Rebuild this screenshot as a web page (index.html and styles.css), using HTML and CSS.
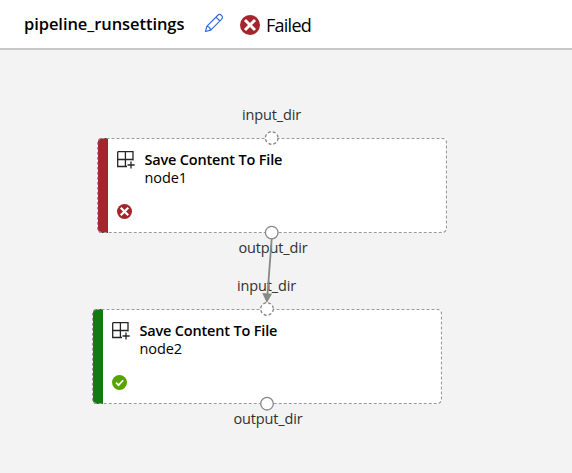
FILE: index.html
```html
<!DOCTYPE html>
<html lang="en">
<head>
<meta charset="utf-8">
<title>pipeline_runsettings</title>
<link rel="stylesheet" href="styles.css">
</head>
<body>
<svg class="defs" width="0" height="0">
  <symbol id="module" viewBox="0 0 18 18"><path d="M.7.7H16V9.5M.7.7V15.5H10M8.4.7V15.5M.7 8.5H16M14 10.5V17.5M10.5 14H17.7" fill="none" stroke="#252525" stroke-width="1.3"/></symbol>
  <symbol id="failed" viewBox="0 0 20 20"><circle cx="10" cy="10" r="10" fill="#a4262c"/><path d="M5 5l10 10M15 5l-10 10" stroke="#fff" stroke-width="2.9"/></symbol>
  <symbol id="done" viewBox="0 0 20 20"><circle cx="10" cy="10" r="10" fill="#57a300"/><path d="M5.3 10.2l3.4 3.4 6.2-6.6" fill="none" stroke="#fff" stroke-width="2.3"/></symbol>
</svg>
<header class="bar">
  <h1 class="title">pipeline_runsettings</h1>
  <svg class="edit" viewBox="0 0 20 20"><path d="M1.5 18.5l1.3-5.2L13.6 2.5Q15.6.5 17.5 2.4T17.5 6.3L6.7 17.1zM2.8 13.3q3.2.5 3.9 3.8M12 4.1l3.9 3.9" fill="none" stroke="#2c68d8" stroke-width="1.15" stroke-linejoin="round"/></svg>
  <svg class="state"><use href="#failed"/></svg>
  <span class="status">Failed</span>
</header>
<main class="canvas">
  <section class="node first">
    <svg class="outline" viewBox="0 0 350 95"><rect x=".5" y=".5" width="349" height="94" rx="4"/></svg>
    <div class="stripe bad"></div>
    <div class="body">
      <svg class="module"><use href="#module"/></svg>
      <div class="text"><div class="name">Save Content To File</div><div class="id">node1</div></div>
      <svg class="badge"><use href="#failed"/></svg>
    </div>
    <span class="label in">input_dir</span>
    <span class="label out">output_dir</span>
  </section>
  <section class="node second">
    <svg class="outline" viewBox="0 0 350 95"><rect x=".5" y=".5" width="349" height="94" rx="4"/></svg>
    <div class="stripe good"></div>
    <div class="body">
      <svg class="module"><use href="#module"/></svg>
      <div class="text"><div class="name">Save Content To File</div><div class="id">node2</div></div>
      <svg class="badge"><use href="#done"/></svg>
    </div>
    <span class="label in">input_dir</span>
    <span class="label out">output_dir</span>
  </section>
  <svg class="edges" viewBox="0 50 572 423">
    <path class="edge" d="M271.7 239L267.5 294"/>
    <path d="M262.3 293L272 293.7L266.8 303z" fill="#8a8886"/>
    <circle class="port open" cx="271.7" cy="138" r="6.3"/>
    <circle class="port" cx="271.7" cy="232.6" r="6.3"/>
    <circle class="port open" cx="267" cy="309" r="6.3"/>
    <circle class="port" cx="267" cy="403.7" r="6.3"/>
  </svg>
</main>
</body>
</html>
```

FILE: styles.css
```css
* { box-sizing: border-box; }
body {
  margin: 0;
  height: 473px;
  overflow: hidden;
  display: flex;
  flex-direction: column;
  background: #f3f3f3;
  color: #000;
  font-family: "Open Sans", "Noto Sans", sans-serif;
}
.defs { position: absolute; }
.bar {
  height: 50px;
  flex: none;
  display: flex;
  align-items: center;
  padding: 0 0 1px 24px;
  background: #fff;
  border-bottom: 2px solid #c8c8c8;
}
.title {
  margin: 0;
  width: 180px;
  font-size: 16.5px;
  line-height: 22px;
  font-weight: 600;
  letter-spacing: -0.07px;
}
.edit { width: 20px; height: 20px; margin-bottom: 2px; }
.state { width: 20px; height: 20px; margin: 2px 6px 0 16px; }
.status { font-size: 18px; line-height: 24px; letter-spacing: -0.75px; padding-top: 3px; }
.canvas { position: relative; flex: 1; }
.node {
  position: absolute;
  width: 350px;
  height: 95px;
  display: flex;
  background: #fff;
  border-radius: 4px;
}
.first { left: 97px; top: 88px; }
.second { left: 92px; top: 259px; }
.outline { position: absolute; inset: 0; width: 350px; height: 95px; }
.outline rect { fill: none; stroke: #9b9a99; stroke-width: 1.2; stroke-dasharray: 3 2; }
.stripe { width: 10px; margin-left: 1px; border-radius: 4px 0 0 4px; }
.bad { background: #a4262c; }
.good { background: #107c10; }
.body {
  display: grid;
  grid-template-columns: 28px auto;
  grid-template-rows: 53px 15px;
  padding: 12.5px 0 0 8.5px;
}
.module { width: 18px; height: 18px; }
.badge { width: 15px; height: 15px; }
.text { font-size: 14.5px; line-height: 18px; white-space: nowrap; padding-top: .5px; }
.name { font-weight: 600; letter-spacing: -0.18px; }
.id { letter-spacing: -0.1px; }
.label {
  position: absolute;
  left: 74.5px;
  width: 200px;
  text-align: center;
  font-size: 14.5px;
  line-height: 20px;
  letter-spacing: -0.15px;
  color: #323130;
}
.in { top: -33px; }
.out { top: 100px; left: 76px; }
.edges { position: absolute; inset: 0; width: 572px; height: 423px; }
.edge { stroke: #8a8886; stroke-width: 1.8; }
.port { fill: #fff; stroke: #8a8886; stroke-width: 1.3; }
.open { stroke-dasharray: 3 2; }
```
